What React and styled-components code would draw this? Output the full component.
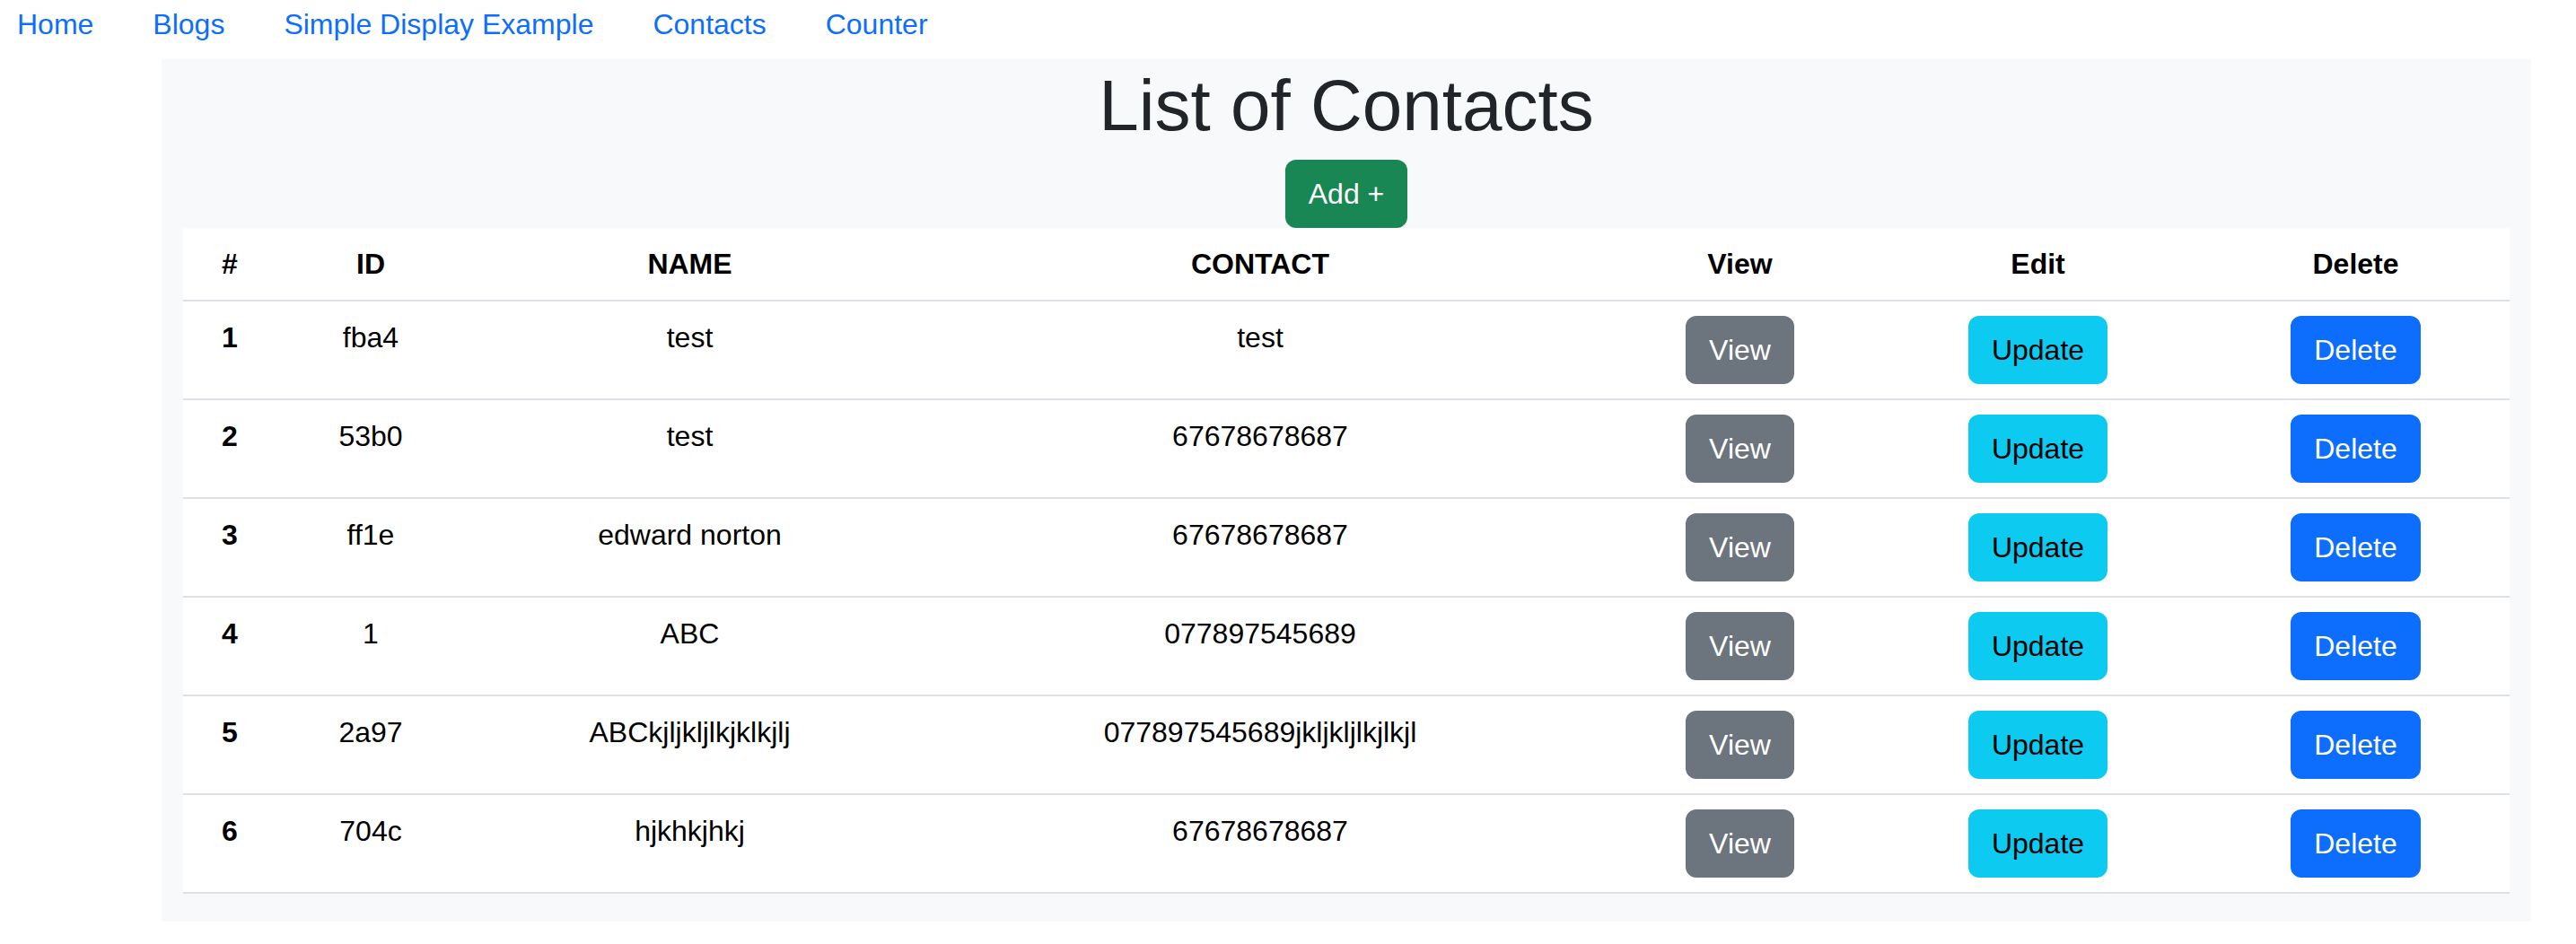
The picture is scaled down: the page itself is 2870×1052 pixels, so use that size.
import styled, { createGlobalStyle } from "styled-components";

const GlobalStyle = createGlobalStyle`
    body {
        margin: 0;
        font-family: "Liberation Sans", Arial, Helvetica, sans-serif;
        font-size: 32px;
        line-height: 1.5;
        color: #212529;
        background: #fff;
    }
    * { box-sizing: border-box; }
`;

const links = ["Home", "Blogs", "Simple Display Example", "Contacts", "Counter"];

const columns = [
    { label: "#", w: 104 },
    { label: "ID", w: 210 },
    { label: "NAME", w: 501 },
    { label: "CONTACT", w: 770 },
    { label: "View", w: 299 },
    { label: "Edit", w: 365 },
    { label: "Delete", w: 343 },
];

const contacts = [
    { id: "fba4", name: "test", contact: "test" },
    { id: "53b0", name: "test", contact: "67678678687" },
    { id: "ff1e", name: "edward norton", contact: "67678678687" },
    { id: "1", name: "ABC", contact: "077897545689" },
    { id: "2a97", name: "ABCkjljkljlkjklkjlj", contact: "077897545689jkljkljlkjlkjl" },
    { id: "704c", name: "hjkhkjhkj", contact: "67678678687" },
];

function App() {
    return (
        <>
            <GlobalStyle />
            <Nav>
                {links.map((l) => (
                    <NavLink key={l} href="#">{l}</NavLink>
                ))}
            </Nav>
            <Panel>
                <Title>List of Contacts</Title>
                <Button $variant="success">Add +</Button>
                <Table>
                    <colgroup>
                        {columns.map((c) => (
                            <Col key={c.label} $w={c.w} />
                        ))}
                    </colgroup>
                    <thead>
                        <tr>
                            {columns.map((c) => (
                                <Th key={c.label}>{c.label}</Th>
                            ))}
                        </tr>
                    </thead>
                    <tbody>
                        {contacts.map((c, i) => (
                            <tr key={c.id}>
                                <Th>{i + 1}</Th>
                                <Td>{c.id}</Td>
                                <Td>{c.name}</Td>
                                <Td>{c.contact}</Td>
                                <Td><Button $variant="secondary">View</Button></Td>
                                <Td><Button $variant="info">Update</Button></Td>
                                <Td><Button $variant="primary">Delete</Button></Td>
                            </tr>
                        ))}
                    </tbody>
                </Table>
            </Panel>
        </>
    );
}

const Nav = styled.nav`
    display: flex;
    gap: 66px;
    height: 66px;
    padding: 3px 0 0 19px;
`;

const NavLink = styled.a`
    color: #0d6efd;
    text-decoration: none;
`;

const Panel = styled.main`
    display: flex;
    flex-direction: column;
    align-items: center;
    margin-left: 180px;
    width: 2640px;
    padding: 4px 24px 31px;
    background-color: #f8f9fa;
`;

const Title = styled.h1`
    margin: 0 0 12px;
    font-size: 80px;
    font-weight: 500;
    line-height: 1.2;
    text-align: center;
`;

const variants = {
    success: { bg: "#198754", fg: "#fff" },
    secondary: { bg: "#6c757d", fg: "#fff" },
    info: { bg: "#0dcaf0", fg: "#000" },
    primary: { bg: "#0d6efd", fg: "#fff" },
};

const Button = styled.button`
    display: inline-block;
    padding: 12px 24px;
    font-family: inherit;
    font-size: 32px;
    line-height: 48px;
    border: 2px solid ${(p) => variants[p.$variant].bg};
    border-radius: 12px;
    background-color: ${(p) => variants[p.$variant].bg};
    color: ${(p) => variants[p.$variant].fg};
    cursor: pointer;
`;

const Table = styled.table`
    width: 100%;
    table-layout: fixed;
    border-collapse: collapse;
    background-color: #fff;
    color: #000;
`;

const Col = styled.col`
    width: ${(p) => p.$w}px;
`;

const Th = styled.th`
    padding: 16px;
    font-weight: 700;
    text-align: center;
    vertical-align: top;
    border-bottom: 2px solid #dee2e6;
`;

const Td = styled.td`
    padding: 16px;
    text-align: center;
    vertical-align: top;
    border-bottom: 2px solid #dee2e6;
`;

export default App;
